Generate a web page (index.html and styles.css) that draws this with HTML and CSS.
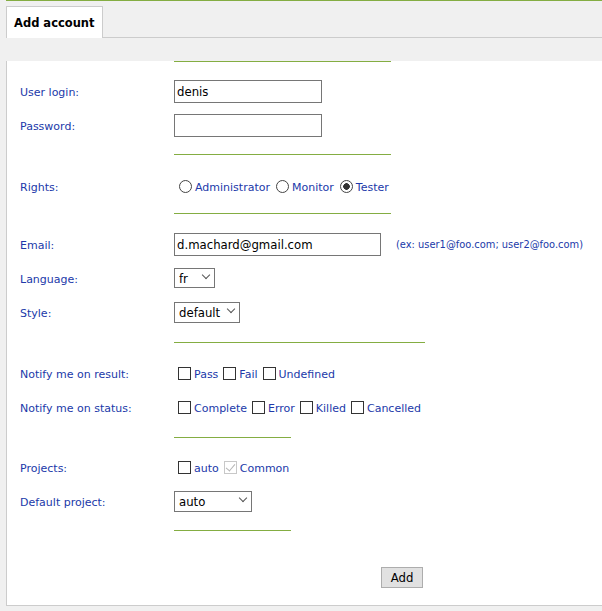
FILE: index.html
```html
<!DOCTYPE html>
<html lang="en">
<head>
<meta charset="utf-8">
<title>Add account</title>
<link rel="stylesheet" href="styles.css">
</head>
<body>
<div class="page">
  <div class="tabbar">
    <div class="tab">Add account</div>
  </div>
  <div class="panel">
    <div class="sep w1 first"></div>
    <div class="group g-a">
      <div class="row"><span class="lbl">User login:</span><input class="txt short" type="text" value="denis"></div>
      <div class="row"><span class="lbl">Password:</span><input class="txt short" type="password" value=""></div>
    </div>
    <div class="sep w1"></div>
    <div class="group g-b">
      <div class="row"><span class="lbl">Rights:</span>
        <div class="opts">
          <label class="opt"><input class="rb" type="radio" name="r">Administrator</label>
          <label class="opt"><input class="rb" type="radio" name="r">Monitor</label>
          <label class="opt"><input class="rb" type="radio" name="r" checked>Tester</label>
        </div>
      </div>
    </div>
    <div class="sep w1"></div>
    <div class="group g-c">
      <div class="row"><span class="lbl">Email:</span><input class="txt long" type="text" value="d.machard@gmail.com"><span class="hint">(ex: user1@foo.com; user2@foo.com)</span></div>
      <div class="row"><span class="lbl">Language:</span><span class="sel"><select class="s-lang"><option>fr</option></select></span></div>
      <div class="row"><span class="lbl">Style:</span><span class="sel"><select class="s-style"><option>default</option></select></span></div>
    </div>
    <div class="sep w2"></div>
    <div class="group g-d">
      <div class="row"><span class="lbl">Notify me on result:</span>
        <div class="opts">
          <label class="opt"><input class="cb" type="checkbox">Pass</label>
          <label class="opt"><input class="cb" type="checkbox">Fail</label>
          <label class="opt"><input class="cb" type="checkbox">Undefined</label>
        </div>
      </div>
      <div class="row"><span class="lbl">Notify me on status:</span>
        <div class="opts">
          <label class="opt"><input class="cb" type="checkbox">Complete</label>
          <label class="opt"><input class="cb" type="checkbox">Error</label>
          <label class="opt"><input class="cb" type="checkbox">Killed</label>
          <label class="opt"><input class="cb" type="checkbox">Cancelled</label>
        </div>
      </div>
    </div>
    <div class="sep w3"></div>
    <div class="group g-e">
      <div class="row"><span class="lbl">Projects:</span>
        <div class="opts">
          <label class="opt"><input class="cb" type="checkbox">auto</label>
          <label class="opt"><input class="cb" type="checkbox" checked disabled>Common</label>
        </div>
      </div>
      <div class="row"><span class="lbl">Default project:</span><span class="sel"><select class="s-proj"><option>auto</option></select></span></div>
    </div>
    <div class="sep w3"></div>
    <div class="actions"><button class="btn" type="button">Add</button></div>
  </div>
</div>
</body>
</html>
```

FILE: styles.css
```css
html, body {
  margin: 0;
  padding: 0;
  overflow: hidden;
  background: #f0f0f0;
  font-family: "DejaVu Sans", Verdana, sans-serif;
}

.page {
  margin: 0 -2px 0 6px;
  border-top: 1px solid #84ad42;
}

.tabbar {
  display: flex;
  height: 31px;
  padding-top: 5px;
  border-bottom: 1px solid #cccccc;
}

.tab {
  box-sizing: border-box;
  height: 32px;
  margin-bottom: -1px;
  padding: 0 7px;
  display: flex;
  align-items: center;
  background: #ffffff;
  border: 1px solid #cccccc;
  border-bottom: none;
  font-weight: bold;
  font-size: 11.5px;
  color: #000;
}

.panel {
  background: #ffffff;
  border: 1px solid #cccccc;
  border-top: none;
  padding: 0 0 17px 13px;
}

.sep {
  height: 1px;
  margin-left: 154px;
  background: #84ad42;
}
.sep.first { margin-top: 23px; }
.sep.w1 { width: 217px; }
.sep.w2 { width: 251px; }
.sep.w3 { width: 117px; }

.group { display: flex; flex-direction: column; }
.g-a { padding: 12px 0; }
.g-b { padding: 14px 0 10px; }
.g-c { padding: 13px 0; }
.g-d { padding: 13px 0; }
.g-e { padding: 12px 0; }

.row {
  display: flex;
  align-items: center;
  height: 34px;
}

.lbl {
  width: 154px;
  flex: none;
  padding-top: 2px;
  font-size: 11px;
  color: #2139a9;
}

.txt {
  box-sizing: border-box;
  height: 23px;
  margin: 0;
  padding: 0 2px;
  border: 1px solid #767676;
  border-radius: 0;
  background: #fff;
  color: #000;
  font-family: "DejaVu Sans Condensed", "Liberation Sans", sans-serif;
  font-size: 13px;
  outline: none;
}
.txt.short { width: 148px; }
.txt.long { width: 207px; }

.hint {
  margin-left: 15px;
  padding-top: 1px;
  font-size: 9.9px;
  color: #2139a9;
}

.opts { display: flex; align-items: center; }

.opt {
  display: flex;
  align-items: center;
  font-size: 11px;
  color: #2139a9;
}

.rb {
  appearance: none;
  -webkit-appearance: none;
  box-sizing: border-box;
  width: 13px;
  height: 13px;
  margin: 0 3px 0 6px;
  border: 1px solid #444;
  border-radius: 50%;
  background: #fff;
  flex: none;
}
.opt:first-child .rb { margin-left: 5px; }
.rb:checked {
  background: radial-gradient(circle, #333 0 3px, #fff 3.6px);
}
.g-b .opt { padding-top: 2px; }
.g-b .rb { margin-top: -2px; }

.cb {
  appearance: none;
  -webkit-appearance: none;
  box-sizing: border-box;
  position: relative;
  width: 13px;
  height: 13px;
  margin: 0 3px 0 5px;
  border: 1px solid #333;
  border-radius: 0;
  background: #fff;
  flex: none;
}
.opt:first-child .cb { margin-left: 4px; }
.cb:disabled { border-color: #c8c8c8; }
.cb:checked::after {
  content: "";
  position: absolute;
  left: 3px;
  top: 0px;
  width: 4px;
  height: 8px;
  border: solid #b5b5b5;
  border-width: 0 1px 1px 0;
  transform: rotate(40deg);
}

.g-d .opt, .g-e .opt { padding-top: 2px; }
.g-d .cb, .g-e .cb { margin-top: -2px; }

.sel {
  position: relative;
  display: inline-flex;
}
.sel::after {
  content: "";
  position: absolute;
  right: 6px;
  top: 4px;
  width: 5px;
  height: 5px;
  border-right: 1px solid #555;
  border-bottom: 1px solid #555;
  transform: rotate(45deg);
  pointer-events: none;
}
.sel select {
  appearance: none;
  -webkit-appearance: none;
  box-sizing: border-box;
  height: 20px;
  margin: 0;
  padding: 0 0 0 4px;
  border: 1px solid #767676;
  border-radius: 0;
  background: #fff;
  color: #000;
  font-family: "DejaVu Sans Condensed", "Liberation Sans", sans-serif;
  font-size: 13px;
}
.s-lang { width: 41px; }
.sel .s-style { width: 66px; height: 21px; }
.sel .s-proj { width: 78px; height: 21px; }

.actions {
  padding: 36px 0 0 361px;
  display: flex;
}

.btn {
  box-sizing: border-box;
  width: 42px;
  height: 21px;
  margin: 0;
  padding: 0;
  border: 1px solid #adadad;
  border-radius: 0;
  background: #e1e1e1;
  color: #000;
  font-family: "DejaVu Sans Condensed", "Liberation Sans", sans-serif;
  font-size: 13px;
}
```
